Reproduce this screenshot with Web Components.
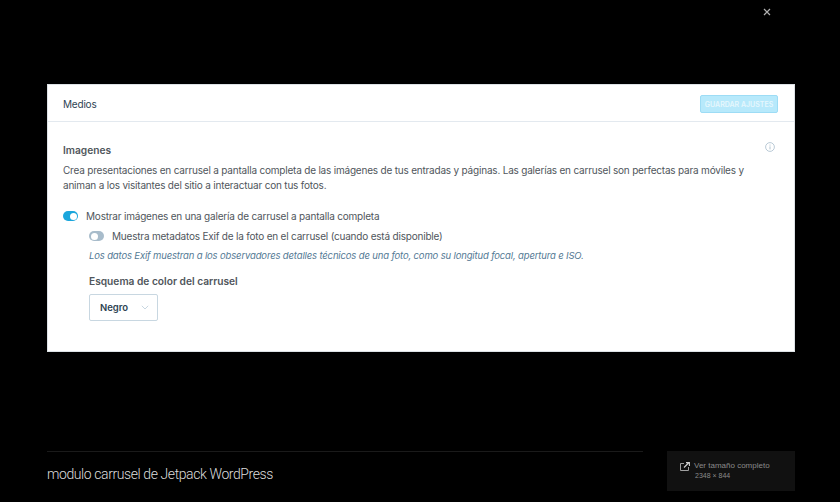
<!DOCTYPE html>
<html lang="es">
<head>
<meta charset="utf-8">
<title>Medios</title>
<style>
html, body { margin: 0; height: 100%; background: #000; overflow: hidden; }
body { font-family: Inter, "Liberation Sans", sans-serif; }
</style>
</head>
<body>
<viewer-page>
  <settings-card slot="main" heading="Medios" action="GUARDAR AJUSTES">
    <h-title>Imagenes</h-title>
    <p-text>Crea presentaciones en carrusel a pantalla completa de las imágenes de tus entradas y páginas. Las galerías en carrusel son perfectas para móviles y animan a los visitantes del sitio a interactuar con tus fotos.</p-text>
    <toggle-row checked>Mostrar imágenes en una galería de carrusel a pantalla completa</toggle-row>
    <sub-settings>
      <toggle-row>Muestra metadatos Exif de la foto en el carrusel (cuando está disponible)</toggle-row>
      <hint-text>Los datos Exif muestran a los observadores detalles técnicos de una foto, como su longitud focal, apertura e ISO.</hint-text>
      <select-field label="Esquema de color del carrusel" value="Negro"></select-field>
    </sub-settings>
  </settings-card>
  <span slot="caption">modulo carrusel de Jetpack WordPress</span>
  <full-size-link slot="side" size="2348 × 844"></full-size-link>
</viewer-page>

<script>
class ViewerPage extends HTMLElement {
    constructor() {
        super();
        this.attachShadow({ mode: "open" }).innerHTML = `<style>
:host { display: block; width: 840px; height: 502px; background: #000; }
.top { height: 84px; display: flex; justify-content: flex-end; align-items: flex-start; padding: 8px 69px 0 0; box-sizing: border-box; }
.top svg { display: block; }
.main { padding: 0 45px 0 47px; }
.foot { display: flex; gap: 24px; margin: 99px 45px 0 47px; }
.caption { flex: 0 0 596px; box-sizing: border-box; border-top: 1px solid #1a1a1a; padding-top: 13px; color: #dcdcdc; font: 300 14px/18px Roboto, "Liberation Sans", sans-serif; letter-spacing: -.41px; }
.side { flex: 1; }
</style>
<div class="top"><svg width="8" height="8" viewBox="0 0 8 8"><path d="M1 1l6 6M7 1L1 7" stroke="#b0b0b0" stroke-width="1.2" fill="none"/></svg></div>
<div class="main"><slot name="main"></slot></div>
<div class="foot"><div class="caption"><slot name="caption"></slot></div><div class="side"><slot name="side"></slot></div></div>`;
    }
}
customElements.define("viewer-page", ViewerPage);

class SettingsCard extends HTMLElement {
    constructor() {
        super();
        this.attachShadow({ mode: "open" });
    }
    connectedCallback() {
        this.shadowRoot.innerHTML = `<style>
:host { display: block; height: 268px; box-sizing: border-box; background: #fff; border: 1px solid #dde2e6; color: #50565c; font-family: Inter, "Liberation Sans", sans-serif; font-size: 10px; letter-spacing: -.2px; }
header { height: 37px; box-sizing: border-box; border-bottom: 1px solid #e3e9ef; display: flex; align-items: center; justify-content: space-between; padding: 2px 16px 0 15px; }
h2 { margin: 0; font-size: 10px; font-weight: 400; color: #2e4453; }
button { width: 78px; height: 18px; padding: 0; background: #b7e9fb; border: 1px solid #9ddcf5; border-radius: 2px; color: #e6f7fd; font: 600 7px/1 Inter, "Liberation Sans", sans-serif; letter-spacing: 0; }
.body { position: relative; padding: 21px 16px 0 15px; }
.info { position: absolute; top: 20px; right: 19px; }
</style>
<header><h2>${this.getAttribute("heading")}</h2><button disabled>${this.getAttribute("action")}</button></header>
<div class="body"><svg class="info" width="10" height="10" viewBox="0 0 10 10" fill="none"><circle cx="5" cy="5" r="4.4" stroke="#a8bccb" stroke-width=".8"/><path d="M5 4.4v3M5 2.6v1" stroke="#a8bccb" stroke-width=".9"/></svg><slot></slot></div>`;
    }
}
customElements.define("settings-card", SettingsCard);

class HTitle extends HTMLElement {
    constructor() {
        super();
        this.attachShadow({ mode: "open" }).innerHTML = `<style>
:host { display: block; font-weight: 600; font-size: 10.2px; line-height: 14px; letter-spacing: 0; margin-bottom: 6px; }
</style><slot></slot>`;
    }
}
customElements.define("h-title", HTitle);

class PText extends HTMLElement {
    constructor() {
        super();
        this.attachShadow({ mode: "open" }).innerHTML = `<style>
:host { display: block; line-height: 14.5px; margin-bottom: 17px; width: 690px; }
</style><slot></slot>`;
    }
}
customElements.define("p-text", PText);

class ToggleRow extends HTMLElement {
    constructor() {
        super();
        const on = this.hasAttribute("checked");
        this.attachShadow({ mode: "open" }).innerHTML = `<style>
:host { display: flex; align-items: center; gap: 8px; height: 14px; line-height: 14px; }
.track { width: 15px; height: 10px; border-radius: 5px; background: ${on ? "#1ba6dc" : "#a8bccb"}; position: relative; flex: none; }
.knob { position: absolute; top: 1.5px; ${on ? "right" : "left"}: 1.5px; width: 7px; height: 7px; border-radius: 50%; background: #fff; }
</style><span class="track"><span class="knob"></span></span><span><slot></slot></span>`;
    }
}
customElements.define("toggle-row", ToggleRow);

class SubSettings extends HTMLElement {
    constructor() {
        super();
        this.attachShadow({ mode: "open" }).innerHTML = `<style>
:host { display: block; padding: 6px 0 0 26px; }
</style><slot></slot>`;
    }
}
customElements.define("sub-settings", SubSettings);

class HintText extends HTMLElement {
    constructor() {
        super();
        this.attachShadow({ mode: "open" }).innerHTML = `<style>
:host { display: block; margin-top: 6px; font-size: 9.5px; line-height: 14px; letter-spacing: -.15px; font-style: italic; color: #537994; }
</style><slot></slot>`;
    }
}
customElements.define("hint-text", HintText);

class SelectField extends HTMLElement {
    constructor() {
        super();
        this.attachShadow({ mode: "open" });
    }
    connectedCallback() {
        this.shadowRoot.innerHTML = `<style>
:host { display: block; margin-top: 11px; }
.label { font-weight: 600; font-size: 10.2px; line-height: 14px; letter-spacing: 0; }
.box { margin-top: 6px; width: 69px; height: 27px; box-sizing: border-box; border: 1px solid #c8d7e1; border-radius: 2px; display: flex; align-items: center; justify-content: space-between; padding: 0 8px 0 10px; font-size: 9.5px; font-weight: 600; letter-spacing: 0; color: #2e4453; }
</style>
<div class="label">${this.getAttribute("label")}</div>
<div class="box"><span>${this.getAttribute("value")}</span><svg width="8" height="5" viewBox="0 0 8 5" fill="none"><path d="M.8.8L4 4 7.2.8" stroke="#c8d7e1"/></svg></div>`;
    }
}
customElements.define("select-field", SelectField);

class FullSizeLink extends HTMLElement {
    constructor() {
        super();
        this.attachShadow({ mode: "open" });
    }
    connectedCallback() {
        this.shadowRoot.innerHTML = `<style>
:host { display: flex; gap: 4px; height: 40px; box-sizing: border-box; background: #111; padding: 10px 0 0 13px; color: #8a8a8a; font: 8px/10px "Liberation Sans", sans-serif; }
svg { flex: none; margin-top: 1px; }
.size { padding-left: 1px; font-size: 7px; line-height: 9px; }
</style>
<svg width="10" height="9" viewBox="0 0 10 9" fill="none"><path d="M4 1.5H.5v7h8V5" stroke="#a0a0a0"/><path d="M4 5.5L8.5 1M6 .6h3.4V4" stroke="#d0d0d0" stroke-width="1.1"/></svg>
<div><div>Ver tamaño completo</div><div class="size">${this.getAttribute("size")}</div></div>`;
    }
}
customElements.define("full-size-link", FullSizeLink);
</script>
</body>
</html>
